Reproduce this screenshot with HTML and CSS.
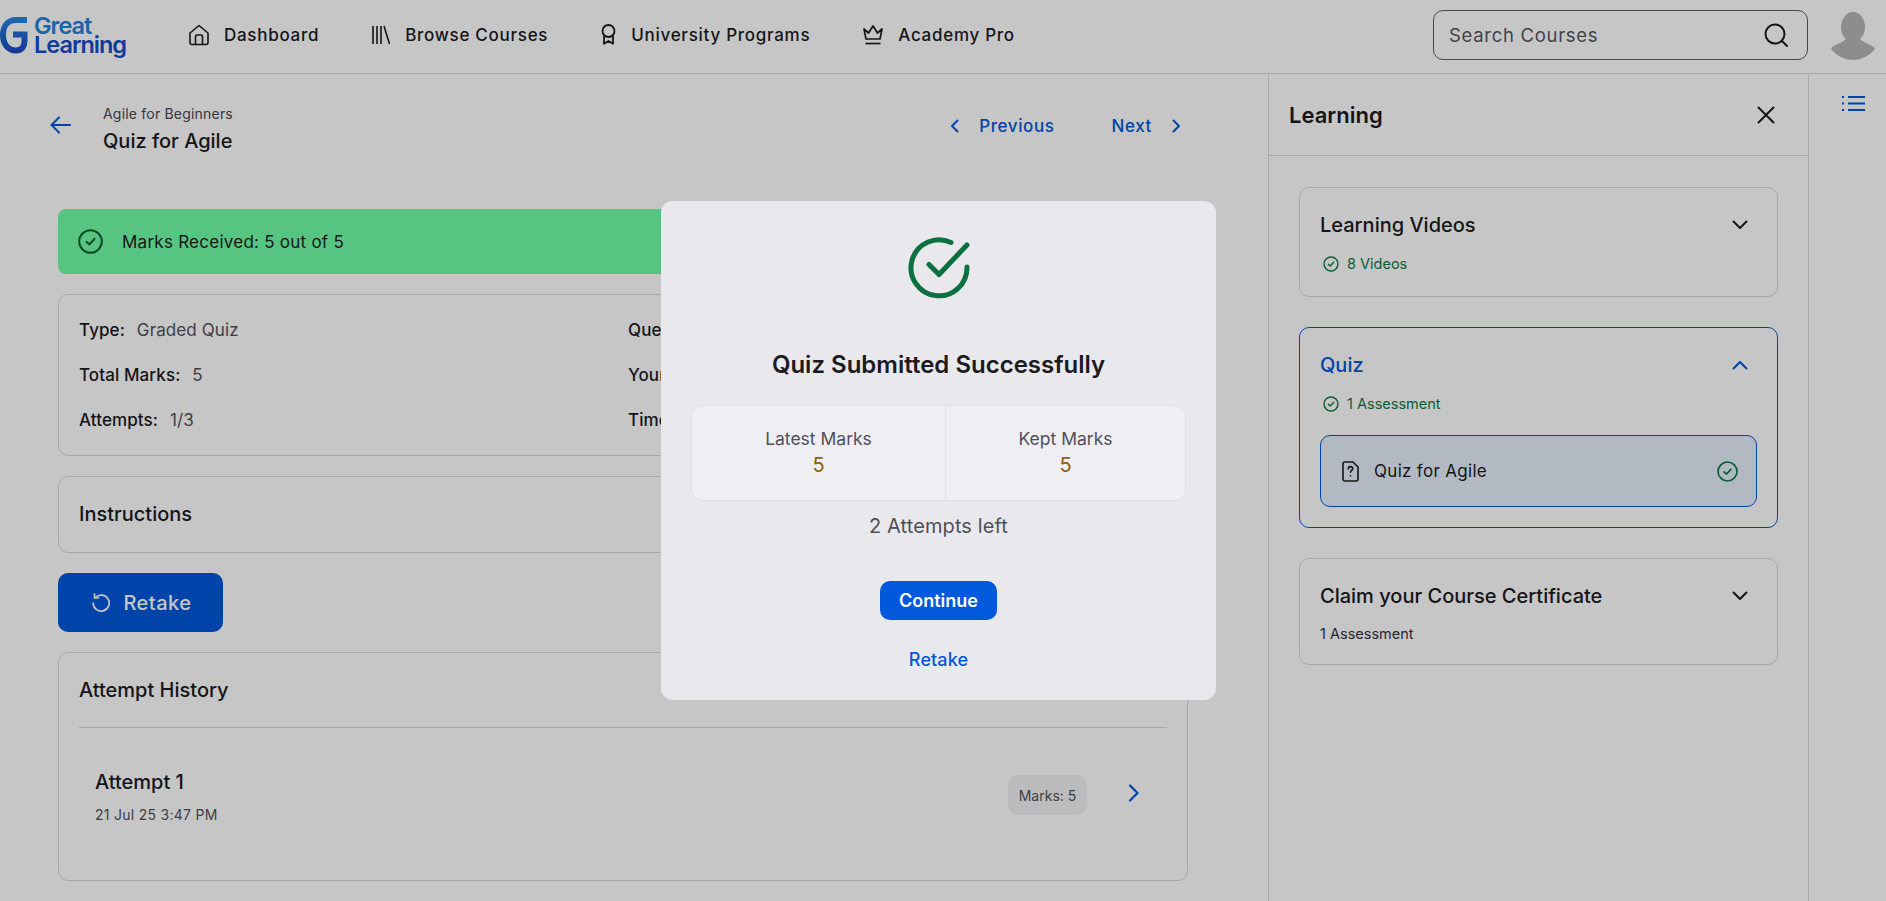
FILE: index.html
```html
<!DOCTYPE html>
<html>
	<head>
		<meta charset="UTF-8">
		<title>Quiz for Agile</title>
		<link rel="stylesheet" href="styles.css">
	</head>
	<body>
		<header class="topbar">
			<div class="logo">
				<svg class="logo-g" width="28" height="38" viewBox="0 0 28 38" fill="none" stroke-width="6">
					<defs><linearGradient id="logo-grad" gradientUnits="userSpaceOnUse" x1="0" y1="0" x2="0" y2="38"><stop offset="0" stop-color="#2a8ae6"/><stop offset="1" stop-color="#1448c0"/></linearGradient></defs>
					<path d="M27 4H16C7 4 3 11 3 19C3 28 8 34.500 16 34.500C22 34.500 24.500 30 24.500 25V18.500H13" stroke="url(#logo-grad)"/>
				</svg>
				<div class="logo-text"><span class="logo-top">Great</span><span class="logo-bottom">Learning</span></div>
			</div>
			<nav class="menu">
				<a class="menu-item">
					<svg width="20" height="22" viewBox="0 0 20 22" fill="none" stroke="#1b1b1f" stroke-width="1.6" stroke-linejoin="round"><path d="M1 9L10 1.500L19 9V18.500C19 20 18.500 20.500 17 20.500H3C1.500 20.500 1 20 1 18.500Z"/><path d="M6.500 20.500V12.500C6.500 11.500 7 11 8 11H12C13 11 13.500 11.500 13.500 12.500V20.500"/></svg>
					Dashboard
				</a>
				<a class="menu-item">
					<svg width="18" height="20" viewBox="0 0 18 20" fill="none" stroke="#1b1b1f" stroke-width="1.600"><path d="M1 1V19M5 1V19M9 1V19M12 1L17.500 19"/></svg>
					Browse Courses
				</a>
				<a class="menu-item">
					<svg width="15" height="21" viewBox="0 0 15 21" fill="none" stroke="#1b1b1f" stroke-width="1.800" stroke-linejoin="round"><circle cx="7.500" cy="7" r="6"/><path d="M3 12V19.800L7.500 17L12 19.800V12"/></svg>
					University Programs
				</a>
				<a class="menu-item">
					<svg width="20" height="22" viewBox="0 0 20 22" fill="none" stroke="#1b1b1f" stroke-width="1.700" stroke-linejoin="round"><path d="M1 5L5.500 9L10 2L14.500 9L19 5L17 15H3Z"/><path d="M2.500 19.500H17.500"/></svg>
					Academy Pro
				</a>
			</nav>
			<div class="search">
				<span>Search Courses</span>
				<svg width="24" height="24" viewBox="0 0 24 24" fill="none" stroke="#1b1b1f" stroke-width="2" stroke-linecap="round"><circle cx="11" cy="11" r="9.500"/><path d="M18 18L23 23"/></svg>
			</div>
			<svg class="avatar" width="44" height="48" viewBox="0 0 44 48" fill="#b6b6b6"><ellipse cx="22" cy="15" rx="12" ry="15"/><path d="M15 27C10 32 3 32 0 37C6 44 14 48 22 48C30 48 38 44 44 37C41 32 34 32 29 27Z"/></svg>
		</header>

		<div class="layout">
			<main class="content">
				<div class="page-head">
					<svg class="back" width="21" height="18" viewBox="0 0 21 18" fill="none" stroke="#0058db" stroke-width="2" stroke-linecap="round" stroke-linejoin="round"><path d="M20 9H2M9 1.500L1.500 9L9 16.500"/></svg>
					<div class="page-title">
						<div class="course-name">Agile for Beginners</div>
						<h1>Quiz for Agile</h1>
					</div>
					<div class="pager">
						<a class="pager-link">
							<svg width="9" height="14" viewBox="0 0 9 14" fill="none" stroke="#0058db" stroke-width="2" stroke-linecap="round" stroke-linejoin="round"><path d="M7.500 1.500L2 7L7.500 12.500"/></svg>
							Previous
						</a>
						<a class="pager-link">
							Next
							<svg width="9" height="14" viewBox="0 0 9 14" fill="none" stroke="#0058db" stroke-width="2" stroke-linecap="round" stroke-linejoin="round"><path d="M1.500 1.500L7 7L1.500 12.500"/></svg>
						</a>
					</div>
				</div>

				<div class="banner">
					<svg width="25" height="25" viewBox="0 0 25 25" fill="none" stroke="#0a5e34" stroke-width="2" stroke-linecap="round" stroke-linejoin="round"><circle cx="12.500" cy="12.500" r="11.300"/><path d="M8.500 12.800L11.300 15.500L16.500 9.800"/></svg>
					Marks Received: 5 out of 5
				</div>

				<section class="card info">
					<div class="info-col">
						<p><b>Type:</b> Graded Quiz</p>
						<p><b>Total Marks:</b> 5</p>
						<p><b>Attempts:</b> 1/3</p>
					</div>
					<div class="info-col">
						<p><b>Questions:</b> 5</p>
						<p><b>Your Marks:</b> 5</p>
						<p><b>Time Taken:</b> 1 min</p>
					</div>
				</section>

				<section class="card instructions">
					<h2>Instructions</h2>
				</section>

				<button class="retake-btn">
					<svg width="18" height="19" viewBox="0 0 18 19" fill="none" stroke="#fff" stroke-width="1.700" stroke-linecap="round" stroke-linejoin="round"><path d="M3.500 4.500A8 8 0 1 1 1.200 10"/><path d="M2.500 1V5H6.500"/></svg>
					Retake
				</button>

				<section class="card history">
					<h2>Attempt History</h2>
					<div class="attempt">
						<div>
							<div class="attempt-name">Attempt 1</div>
							<div class="attempt-date">21 Jul 25 3:47 PM</div>
						</div>
						<span class="marks-pill">Marks: 5</span>
						<svg width="11" height="18" viewBox="0 0 11 18" fill="none" stroke="#0058db" stroke-width="2.200" stroke-linecap="round" stroke-linejoin="round"><path d="M2 1.500L9.500 9L2 16.500"/></svg>
					</div>
				</section>
			</main>

			<aside class="panel">
				<div class="panel-head">
					<h2>Learning</h2>
					<svg width="18" height="18" viewBox="0 0 18 18" fill="none" stroke="#1b1b1f" stroke-width="2" stroke-linecap="round"><path d="M1.500 1.500L16.500 16.500M16.500 1.500L1.500 16.500"/></svg>
				</div>
				<div class="panel-body">
					<div class="module module-videos">
						<div class="module-head">
							<h3>Learning Videos</h3>
							<svg width="16" height="10" viewBox="0 0 16 10" fill="none" stroke="#1b1b1f" stroke-width="2" stroke-linecap="round" stroke-linejoin="round"><path d="M1.500 1.500L8 8L14.500 1.500"/></svg>
						</div>
						<div class="module-sub done">
							<svg width="16" height="16" viewBox="0 0 16 16" fill="none" stroke="#0a7a44" stroke-width="1.400" stroke-linecap="round" stroke-linejoin="round"><circle cx="8" cy="8" r="7"/><path d="M5.300 8.200L7.200 10L10.700 6.300"/></svg>
							8 Videos
						</div>
					</div>
					<div class="module module-open">
						<div class="module-head">
							<h3>Quiz</h3>
							<svg width="16" height="10" viewBox="0 0 16 10" fill="none" stroke="#0058db" stroke-width="2" stroke-linecap="round" stroke-linejoin="round"><path d="M1.500 8.500L8 2L14.500 8.500"/></svg>
						</div>
						<div class="module-sub done">
							<svg width="16" height="16" viewBox="0 0 16 16" fill="none" stroke="#0a7a44" stroke-width="1.400" stroke-linecap="round" stroke-linejoin="round"><circle cx="8" cy="8" r="7"/><path d="M5.300 8.200L7.200 10L10.700 6.300"/></svg>
							1 Assessment
						</div>
						<div class="lesson">
							<svg width="17" height="21" viewBox="0 0 17 21" fill="none" stroke="#1b1b1f" stroke-width="1.600" stroke-linecap="round" stroke-linejoin="round"><path d="M3 1H11L16 6V18C16 19.200 15.200 20 14 20H3C1.800 20 1 19.200 1 18V3C1 1.800 1.800 1 3 1Z"/><path d="M6.300 8C6.300 6.500 7.200 5.600 8.500 5.600C9.800 5.600 10.700 6.500 10.700 7.700C10.700 9.400 8.500 9.500 8.500 11.300"/><path d="M8.500 14.800V14.900"/></svg>
							<span class="lesson-name">Quiz for Agile</span>
							<svg width="21" height="21" viewBox="0 0 21 21" fill="none" stroke="#0a7a44" stroke-width="1.700" stroke-linecap="round" stroke-linejoin="round"><circle cx="10.500" cy="10.500" r="9.500"/><path d="M7 10.800L9.500 13L14 8.300"/></svg>
						</div>
					</div>
					<div class="module module-cert">
						<div class="module-head">
							<h3>Claim your Course Certificate</h3>
							<svg width="16" height="10" viewBox="0 0 16 10" fill="none" stroke="#1b1b1f" stroke-width="2" stroke-linecap="round" stroke-linejoin="round"><path d="M1.500 1.500L8 8L14.500 1.500"/></svg>
						</div>
						<div class="module-sub">1 Assessment</div>
					</div>
				</div>
			</aside>

			<div class="rail">
				<svg width="23" height="17" viewBox="0 0 23 17" fill="none" stroke="#0058db" stroke-width="2"><path d="M6 2H23M6 8.500H23M6 15H23"/><path d="M0 2H2M0 8.500H2M0 15H2"/></svg>
			</div>
		</div>

		<div class="overlay"></div>

		<div class="modal">
			<svg class="modal-icon" width="62" height="62" viewBox="0 0 62 62" fill="none" stroke="#0a7040" stroke-width="5" stroke-linecap="round" stroke-linejoin="round"><path d="M43 5.500A28 28 0 1 0 59 30"/><path d="M21 27.500L31 37.500L59 8"/></svg>
			<h2>Quiz Submitted Successfully</h2>
			<div class="stats">
				<div class="stat stat-latest">
					<span>Latest Marks</span>
					<strong>5</strong>
				</div>
				<div class="stat">
					<span>Kept Marks</span>
					<strong>5</strong>
				</div>
			</div>
			<div class="attempts-left">2 Attempts left</div>
			<button class="continue-btn">Continue</button>
			<a class="retake-link">Retake</a>
		</div>
	</body>
</html>
```

FILE: styles.css
```css
*{margin: 0;padding: 0;box-sizing: border-box;}
html,body{height: 100%;overflow: hidden;}
body{background: #fff;color: #1b1b1f;font-family: Inter, "Liberation Sans", sans-serif;font-size: 17px;}
svg{flex: none;display: block;}
h1,h2,h3{font-weight: 500;}

/* top bar */
.topbar{height: 74px;display: flex;align-items: center;border-bottom: 1px solid #dcdcdc;padding: 0 11px 4px 0;}
.logo{width: 127px;display: flex;gap: 6px;align-items: center;margin-right: 62px;}
.logo-text{display: flex;flex-direction: column;line-height: 19px;font-size: 23.500px;font-weight: 600;letter-spacing: -1px;}
.logo-top{color: #2580d8;}
.logo-bottom{color: #144dc6;}
.menu{display: flex;gap: 53px;flex: 1;}
.menu-item{display: flex;align-items: center;gap: 15px;font-weight: 500;letter-spacing: .72px;}
.search{width: 375px;height: 50px;border: 1px solid #5d5d66;border-radius: 10px;display: flex;align-items: center;justify-content: space-between;padding: 0 19px 0 15px;font-size: 18.500px;letter-spacing: .7px;color: #55555e;margin-right: 23px;}
.avatar{margin-top: 3px;}

/* layout */
.layout{display: flex;height: 827px;}
.content{width: 1268px;padding: 0 80px 0 58px;display: flex;flex-direction: column;}
.page-head{height: 135px;display: flex;align-items: flex-start;padding-top: 26px;}
.back{margin: 16px 32px 0 -8px;}
.course-name{font-size: 14px;line-height: 28px;letter-spacing: .2px;color: #47474f;}
.page-title h1{font-size: 20px;line-height: 26px;}
.pager{margin-left: auto;display: flex;gap: 57px;padding: 16px 7px 0 0;}
.pager-link{display: flex;align-items: center;gap: 20px;color: #0058db;font-weight: 500;letter-spacing: .6px;}

.banner{height: 65px;background: #70fda6;border-radius: 8px;display: flex;align-items: center;gap: 19px;padding-left: 20px;margin-bottom: 20px;letter-spacing: .25px;}

.card{border: 1px solid #d9d9de;border-radius: 10px;margin-bottom: 20px;}
.info{height: 162px;display: flex;padding-left: 20px;}
.info-col{width: 549px;display: flex;flex-direction: column;gap: 26px;padding-top: 26px;color: #50505a;letter-spacing: .1px;}
.info-col p{line-height: 19px;}
.info-col b{font-weight: 500;color: #1b1b1f;margin-right: 7px;}
.card h2{font-size: 20px;}
.instructions{height: 77px;padding: 25px 20px;}
.instructions h2{line-height: 24px;}
.retake-btn{width: 165px;height: 59px;border: 0;border-radius: 10px;background: #0058db;color: #fff;font: 500 20px Inter, "Liberation Sans", sans-serif;letter-spacing: .5px;display: flex;align-items: center;justify-content: center;gap: 13px;padding-left: 3px;margin-bottom: 20px;}
.history{height: 229px;padding: 25px 20px 0;}
.history h2{line-height: 24px;padding-bottom: 25px;border-bottom: 1px solid #d9d9de;}
.attempt{display: flex;align-items: center;padding: 42px 28px 0 16px;}
.attempt > div{flex: 1;}
.attempt-name{font-size: 20px;font-weight: 500;line-height: 24px;margin-bottom: 11px;}
.attempt-date{font-size: 14px;line-height: 20px;letter-spacing: .28px;color: #50505a;}
.marks-pill{width: 79px;height: 40px;border-radius: 10px;background: #f2f2f5;font-size: 14px;color: #50505a;display: flex;align-items: center;justify-content: center;margin: -5px 41px 0 0;}
.attempt > svg{margin-top: -9px;}

/* right panel */
.panel{width: 541px;border-left: 1px solid #dcdcdc;border-right: 1px solid #dcdcdc;}
.panel-head{height: 82px;border-bottom: 1px solid #d9d9de;display: flex;align-items: center;justify-content: space-between;padding: 0 33px 0 20px;}
.panel-head h2{font-size: 22px;font-weight: 600;}
.panel-body{padding: 31px 30px;display: flex;flex-direction: column;gap: 30px;}
.module{border: 1px solid #d9d9de;border-radius: 10px;padding: 25px 20px 0;}
.module-videos{height: 110px;}
.module-cert{height: 107px;}
.module-open{height: 201px;border-color: #0058db;}
.module-open h3{color: #0058db;}
.module-head{display: flex;align-items: center;justify-content: space-between;padding-right: 9px;}
.module-head h3{font-size: 20px;line-height: 24px;}
.module-sub{display: flex;align-items: center;gap: 8px;font-size: 14.500px;line-height: 20px;margin-top: 17px;color: #30303a;}
.module-cert .module-sub{margin-top: 16px;}
.module-sub.done{color: #0a7a44;padding-left: 3px;}
.lesson{height: 72px;margin: 21px 0 0;border: 1px solid #0058db;border-radius: 10px;background: #e6effb;display: flex;align-items: center;padding: 0 18px 0 21px;gap: 15px;}
.lesson-name{flex: 1;letter-spacing: .3px;font-weight: 400;}
.rail{flex: 1;padding: 21px 0 0 33px;}

/* overlay and dialog */
.overlay{position: fixed;left: 0;top: 0;right: 0;bottom: 0;background: rgba(0,0,0,.224);}
.modal{position: fixed;left: 661px;top: 201px;width: 555px;height: 499px;background: #e9e8ec;border-radius: 12px;display: flex;flex-direction: column;align-items: center;padding: 36px 30px 0;}
.modal h2{font-size: 24px;font-weight: 600;line-height: 30px;margin-top: 51px;}
.stats{width: 495px;height: 96px;margin-top: 25px;background: #efeef2;border: 1px solid #e1e0e5;border-radius: 12px;display: flex;}
.stat{flex: 1;display: flex;flex-direction: column;align-items: center;padding-top: 20px;}
.stat-latest{flex: none;width: 253px;}
.stat + .stat{border-left: 1px solid #e1e0e5;}
.stat span{font-size: 17.500px;line-height: 26px;color: #4f4f58;}
.stat strong{font-size: 20px;line-height: 26px;font-weight: 400;color: #925d07;}
.attempts-left{font-size: 20px;line-height: 26px;margin-top: 12px;color: #4f4f58;letter-spacing: .1px;}
.continue-btn{width: 117px;height: 39px;margin-top: 42px;border: 0;border-radius: 10px;background: #0058db;color: #fff;font: 600 18px Inter, "Liberation Sans", sans-serif;}
.retake-link{font-size: 18px;font-weight: 500;line-height: 24px;margin-top: 28px;color: #0058db;letter-spacing: .1px;}
```
